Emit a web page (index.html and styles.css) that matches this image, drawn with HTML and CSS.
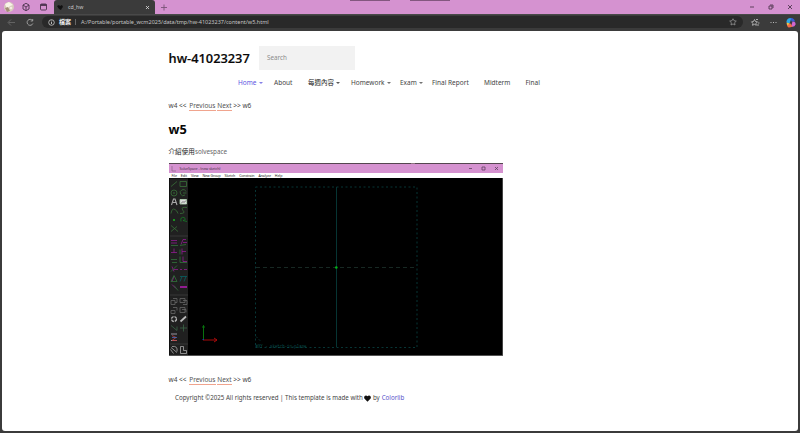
FILE: index.html
```html
<!DOCTYPE html>
<html lang="zh-Hant">
<head>
<meta charset="utf-8">
<title>cd_hw</title>
<link rel="stylesheet" href="styles.css">
</head>
<body>
<div class="browser">
  <header class="tabs">
    <svg class="tab-tools" width="54" height="14" viewBox="0 0 54 14">
      <circle cx="9" cy="7" r="5" fill="#d8cdbd"/><path d="M5 4l4-2 4 3-3 1-3 3z" fill="#f8f3e8"/><path d="M5 8l3-1 2 4-3 1z" fill="#a38d78"/><circle cx="11" cy="8" r="1.3" fill="#f4ede2"/>
      <g fill="none" stroke="#49324d" stroke-width=".9"><path d="M23 5l3-1.700L29 5v4l-3 1.700L23 9zM23 5l3 2 3-2M26 7v3.500"/><rect x="40.500" y="4" width="6" height="6" rx="1"/><path d="M40.500 5h6" stroke-width="1.800"/></g>
    </svg>
    <div class="tab"><svg width="7" height="7" viewBox="0 0 7 7"><path d="M0 2l2-1 1 1 2-1 1 2-1 1-1 2-2-1z" fill="#111"/></svg><span>cd_hw</span><svg class="tab-close" width="5" height="5" viewBox="0 0 5 5"><path d="M1 1l3 3M4 1L1 4" stroke="#ddd" stroke-width=".8"/></svg></div>
    <svg class="new-tab" width="7" height="7" viewBox="0 0 7 7"><path d="M0 3.500h6M3 .5v6" stroke="#795377" stroke-width=".9"/></svg>
    <div class="edges"><i></i><i></i></div>
    <svg class="window-buttons" width="52" height="14" viewBox="0 0 52 14"><g fill="none" stroke="#513851" stroke-width=".9"><path d="M2 7h4M40 5l4 4M44 5l-4 4"/><path d="M21 6h3v3h-3zM22 5h3v3"/></g></svg>
  </header>
  <div class="toolbar">
    <svg width="42" height="16" viewBox="0 0 42 16"><g fill="none" stroke="#a7a7a7" stroke-width=".9"><path d="M15 7.500H8.500M11 4.500l-3 3 3 3" stroke="#686868"/><path d="M32.500 5.500a3 3 0 1 0 .4 3M32.700 4v2h-2"/></g></svg>
    <div class="address"><svg width="7" height="7" viewBox="0 0 7 7"><circle cx="3.500" cy="3.500" r="2.800" fill="none" stroke="#ccc" stroke-width=".8"/><path d="M3.500 3v2M3.500 1.700v.7" stroke="#ddd" stroke-width=".8"/></svg><b>檔案</b><i></i><span>A:/Portable/portable_wcm2025/data/tmp/hw-41023237/content/w5.html</span><svg class="star" width="8" height="8" viewBox="0 0 8 8"><path d="M4 .7l1 2 2.300.4-1.700 1.600.4 2.300-2-1.100L2 7l.4-2.300L.7 3.100 3 2.700z" fill="none" stroke="#929292" stroke-width=".8"/></svg></div>
    <svg class="actions" width="57" height="16" viewBox="0 0 57 16"><path d="M11.500 4.500l1 2 2 .3-1.500 1.500.3 2-1.800-1-2 1 .4-2L8.500 6.800l2-.3zM13 4.500h2M15 8h1.500M14 10h2" fill="none" stroke="#c5c5c5" stroke-width=".8"/><path d="M27.500 7.500h1M30 7.500h1M32.500 7.500h1" stroke="#bbb"/><g transform="translate(-.5 -.5)"><path d="M44 7Q44.500 3 49 3.500l-2 5.500q-3 1-3-2z" fill="#2aa7e8"/><path d="M48 3.500q3.500-.5 4.500 3.500h-3.500z" fill="#365bd8"/><path d="M50 7q3.500 0 3 3-1 3-4.500 2z" fill="#d266cf"/><path d="M44 9h4l2 3q-4.500 2-5 0z" fill="#f26c48"/><path d="M44 8l3 1-2 2z" fill="#edca45"/></g></svg>
  </div>
  <main class="page">
    <div class="site">
      <div class="brand"><h1>hw-41023237</h1><div class="search">Search</div></div>
      <nav>
        <a class="home arrow">Home</a><a class="about">About</a><a class="weekly arrow">每週內容</a><a class="homework arrow">Homework</a><a class="exam arrow">Exam</a><a class="report">Final Report</a><a class="mid">Midterm</a><a>Final</a>
      </nav>
      <p class="pager top"><span>w4 &lt;&lt;</span> <a>Previous</a> <a>Next</a> <span>&gt;&gt; w6</span></p>
      <h2>w5</h2>
      <p class="intro">介紹使用<span>solvespace</span></p>
      <figure class="sketch">
        <div class="behind"></div>
        <div class="app-title"><svg width="6" height="6" viewBox="0 0 6 6"><path d="M1 0v5h4" fill="none" stroke="#936b90" stroke-width=".8"/></svg><span>SolveSpace - (new sketch)</span><svg class="app-buttons" width="38" height="9" viewBox="0 0 38 9"><path d="M4 4.500h3M17 3h3v3h-3zM30 3l3 3M33 3l-3 3" fill="none" stroke="#60435f" stroke-width=".8"/></svg></div>
        <div class="app-menu"><span>File</span><span>Edit</span><span>View</span><span>New Group</span><span>Sketch</span><span>Constrain</span><span>Analyze</span><span>Help</span></div>
        <svg class="canvas" width="334" height="178" viewBox="169 178.500 334 178">
          <path d="M168 178h335v179H168z" fill="#000"/><path d="M169.500 179H188v176.500h-18.500z" fill="#202020"/>
          <path d="M170 236.500h18M170 295.500h18M170 344.500h18" stroke="#373737"/>
          <path d="M169 356h334M502.700 178v178" stroke="#777" stroke-width=".7"/>
          <g fill="none" stroke-width=".8">
            <g stroke="#397039"><path d="M171 187l6-5M180 182h6.500v5H180z"/><circle cx="174" cy="193.500" r="3"/><circle cx="174" cy="193.500" r=".5"/><path d="M186 192a3 3 0 1 0-1 3.500M183 193.500h3.500"/><path d="M171 214q1-6 4-4 2 1 3 4M187 208q-7-1-4 3 3 3-3 3M171 226l7 6M171 232l6-5"/><path d="M181 222q-1-5 3-4 3 2-1 3l4 1" stroke="#147c24"/></g>
            <path d="M171.500 205.500l2-6h1.500l2 6M173 203h3" stroke="#aaa" stroke-width="1.100"/><path d="M180 200h6.500v4.500H180z" fill="#ddd" stroke="#b9d9b9"/><path d="M181 204l2-2 1 1 2-2" stroke="#555"/>
            <g stroke="#911c91"><path d="M171 241h6M171 243.500h6M181 245l2-5 3 0M183 243h4M174 249v4M171 253h6M182 249v6M182 252h4M172 267l2 5M174 270h4M180 270h2M184 270h3M172 282l2-5M172 285l4 4"/><path d="M180 287.500h7" stroke-width="2"/><path d="M183 257v5h4"/></g>
            <g stroke="#31733a"><path d="M171 246h7M180 246l6-1M171 260h6M172 263h5M180 257v6h7M171 272l6-6M171 282l3-6 3 6zM180 250v5M174 286l4 5"/></g>
            <path d="M180 282l2-5M184 282l2-5M180 277h7" stroke="#086062"/>
            <g stroke="#666"><path d="M171 301h4v4h-4zM173 299h4v4h-2M180 299h5v4h-5zM183 301h4v4h-4M171 311h4v3h-4zM173 308h4v3M180 308h5v5h-5zM182 310h4v3"/><circle cx="174" cy="319.500" r="2.500" stroke-dasharray="3 1" stroke="#bbb" stroke-width="1.300"/><path d="M180.500 322l5.500-5" stroke="#bbb" stroke-width="1.700"/><path d="M171 348l6 5M170.500 350l3 4M172 347q6-1 5 5M180.500 347v7h6v-3h-3v-4z" stroke="#aaa"/></g>
            <path d="M171 326l6 5v-4M180 328.500h7M183.500 325v7" stroke="#3a6446"/><path d="M171 334.500h6M171 341h6" stroke="#b5b5c5"/><path d="M172 336l4 2-4 3h5" stroke="#be4242"/><path d="M172 338h5" stroke="#4968bc"/>
          </g>
          <circle cx="174" cy="220.500" r="1" fill="#18b91e"/>
          <path d="M255.500 187.500H417v160.500H255.500z" fill="none" stroke="#073535" stroke-dasharray="2 2.500"/>
          <path d="M336.500 187.500v160" stroke="#063433"/><path d="M256 268h161" stroke="#172823" stroke-dasharray="4 3"/><circle cx="336.300" cy="268" r="1.300" fill="#00b516"/>
          <path d="M203.500 340v-14M202.500 328l1-2 1 2" fill="none" stroke="#08720e"/><path d="M203 340.500h14M214 338.500l3 2-3 2" fill="none" stroke="#a90b0b"/><path d="M202.500 340h1.500" stroke="#1639aa"/>
          <path d="M256 337l5 5" stroke="#073535" stroke-dasharray="2 2"/>
          <text x="255.500" y="348" textLength="51" lengthAdjust="spacingAndGlyphs" class="plane-label">#XY - sketch-in-plane</text>
        </svg>
      </figure>
      <p class="pager bottom"><span>w4 &lt;&lt;</span> <a>Previous</a> <a>Next</a> <span>&gt;&gt; w6</span></p>
      <footer><span>Copyright ©2025 All rights reserved | This template is made with</span><svg width="7" height="7" viewBox="0 0 7 7"><path d="M3.500 6.700L.6 3.800C-1 1.500 1.800-.7 3.500 1.300 5.200-.7 8 1.500 6.400 3.800z"/></svg><span>by</span><a>Colorlib</a></footer>
    </div>
  </main>
</div>
</body>
</html>
```
FILE: styles.css
```css
* { box-sizing: border-box; }
body { margin: 0; overflow: hidden; font: 6px/8px "Noto Sans", "Noto Sans CJK TC", sans-serif; color: #444; }
svg { display: block; flex: none; }
.browser { width: 800px; height: 433px; background: #3b3b3b; }
.tabs { height: 14px; display: flex; background: #d592d0; position: relative; }
.tab { width: 101px; height: 14px; padding: 0 5px 0 3px; display: flex; align-items: center; gap: 4px; border-radius: 3px 3px 0 0; background: #3b3b3b; color: #ccc; font-size: 5.200px; }
.tab-close { margin-left: auto; }
.new-tab { margin: 4px 0 0 6px; }
.edges { position: absolute; top: 0; left: 350px; display: flex; gap: 20px; }
.edges i { width: 40px; height: 1px; background: #83577f; }
.window-buttons { margin-left: auto; }
.toolbar { height: 17px; display: flex; border-top: 1px solid #494949; }
.address { width: 701px; height: 12px; margin-top: 1px; padding: 0 6px; display: flex; align-items: center; border-radius: 6px; background: #292929; color: #c4c4c4; font-size: 5.500px; white-space: nowrap; }
.address b { margin-left: 4px; color: #eee; font-size: 6px; }
.address i { width: 1px; height: 6px; background: #686868; margin: 0 5px 0 4px; }
.address .star { margin-left: auto; }
.page { height: 400px; margin: 0 2px; background: #fff; border-radius: 3px; overflow: hidden; }
.site { width: 400px; margin-left: 166.500px; padding-top: 15px; }
.brand { display: flex; height: 24px; }
h1 { width: 90.500px; margin: 0; color: #080808; font: 600 12.800px/24px "Open Sans", "Noto Sans", sans-serif; -webkit-text-stroke: .15px #080808; white-space: nowrap; }
.search { width: 96px; height: 24px; padding: 0 8px; background: #f2f2f2; color: #8c8c8c; font-size: 6.300px; line-height: 24px; }
nav { display: flex; height: 10px; margin: 8px 0 0 69.500px; line-height: 10px; font-size: 6.500px; white-space: nowrap; }
nav a { flex: none; }
.home { width: 36px; color: #5c55df; }
.about { width: 34px; }
.weekly { width: 43px; color: #222; }
.homework { width: 49px; }
.exam { width: 32px; }
.report { width: 52px; }
.mid { width: 41.500px; }
.arrow::after { content: ""; display: inline-block; margin: 0 0 1.500px 2px; border: 2.200px solid transparent; border-top: 2.500px solid currentColor; border-bottom: 0; opacity: .75; }
.pager { margin: 0; height: 10px; font-size: 6.500px; line-height: 9px; letter-spacing: .02px; white-space: nowrap; }
.pager a { display: inline-block; height: 10px; color: #555; border-bottom: 1px solid #f0a48e; }
.pager a:first-of-type { margin-left: 1px; }
.top { margin-top: 13px; }
h2 { margin: 10px 0 0; height: 17px; color: #080808; font: 700 12.800px/17px "Noto Sans", sans-serif; }
.intro { margin: 9px 0 0; height: 10px; line-height: 10px; font-size: 6.600px; color: #222; white-space: nowrap; }
.intro span { color: #666; font-size: 6.300px; }
.sketch { width: 334px; height: 193px; margin: 6px 0 0; }
.behind { height: 1px; background: linear-gradient(90deg, #554650 0 242px, #8c757f 242px 246px, #554650 246px); }
.app-title { height: 9px; display: flex; align-items: center; gap: 3px; padding-left: 2px; background: #d592d0; color: #4c344b; font-size: 3.700px; white-space: nowrap; }
.app-title span { letter-spacing: -.13px; }
.app-buttons { margin-left: auto; }
.app-menu { height: 5px; padding-left: 3px; display: flex; gap: 4px; font-size: 3.600px; letter-spacing: -.1px; line-height: 5px; color: #222; background: #fff; white-space: nowrap; }
.plane-label { font: 5px "Liberation Mono", monospace; fill: #07504f; }
.bottom { margin-top: 19px; }
footer { display: flex; align-items: center; gap: 1.500px; height: 10px; margin: 8px 0 0 6.500px; font-size: 6.180px; white-space: nowrap; }
footer svg { fill: #111; }
footer a { margin-left: .5px; color: #5550c9; }
```
